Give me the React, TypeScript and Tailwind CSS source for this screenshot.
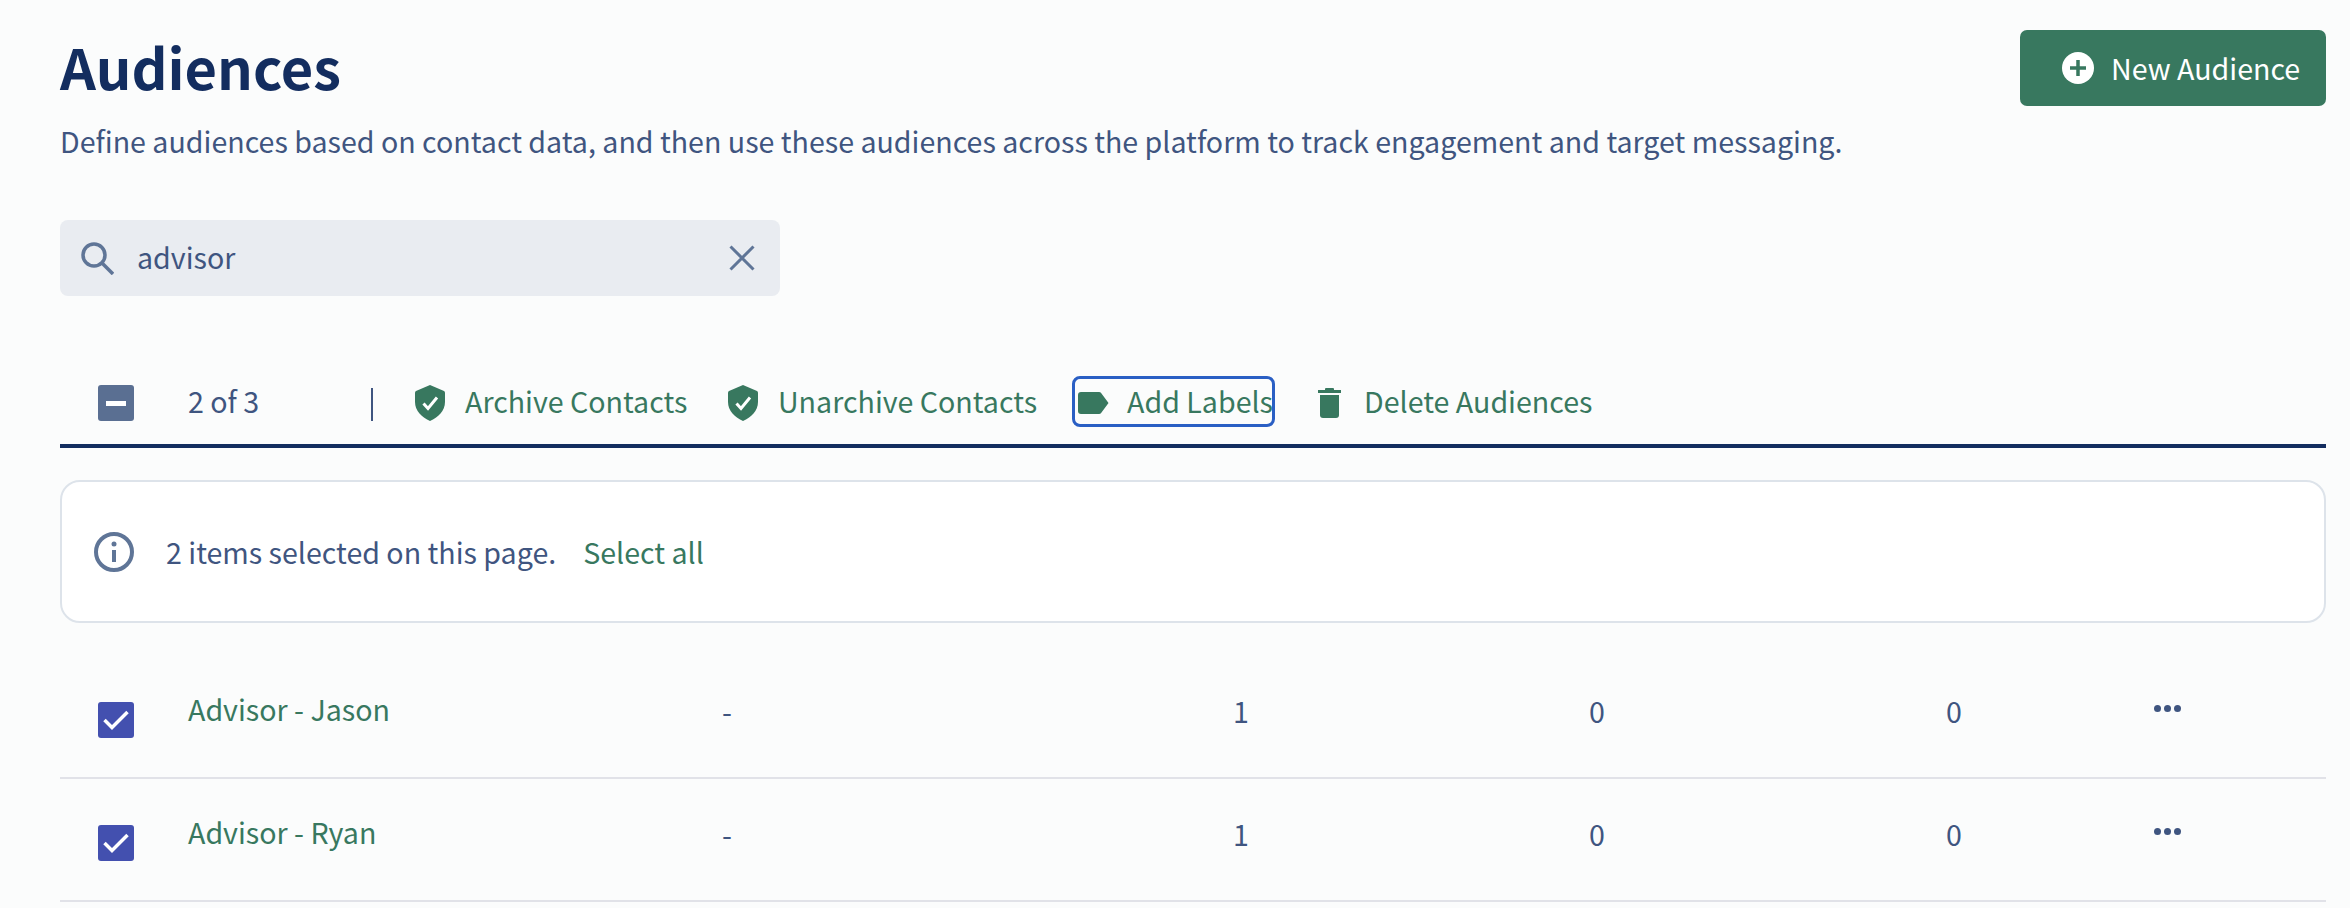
const FONT = "font-['Noto_Sans_CJK_SC','Noto_Sans',sans-serif]";

function ShieldIcon() {
  return (
    <svg width="30" height="36" viewBox="0 0 30 36" className="shrink-0">
      <path d="M15 0 L29 6 Q30 6.5 30 8 V17 C30 26 23 32.500 15 36 C7 32.500 0 26 0 17 V8 Q0 6.500 1 6 Z" fill="#38785f" />
      <path d="M8.500 18.500 L13 23.500 L22 12.500" fill="none" stroke="#ffffff" strokeWidth="3" />
    </svg>
  );
}

function TagIcon() {
  return (
    <svg width="31" height="22" viewBox="0 0 31 22" className="shrink-0">
      <path d="M3 0 H21 Q22.500 0 23.300 1.200 L30.500 11 L23.300 20.800 Q22.500 22 21 22 H3 Q0 22 0 19 V3 Q0 0 3 0 Z" fill="#38785f" />
    </svg>
  );
}

function TrashIcon() {
  return (
    <svg width="23" height="30" viewBox="0 0 23 30" className="shrink-0">
      <path d="M8 0 H15 Q16 0 16 1 V2 H23 V5 H0 V2 H7 V1 Q7 0 8 0 Z" fill="#38785f" />
      <path d="M2 7 H21 V27 Q21 30 18 30 H5 Q2 30 2 27 Z" fill="#38785f" />
    </svg>
  );
}

function RowCheck() {
  return (
    <div className="flex h-[36px] w-[36px] items-center justify-center rounded-[3px] bg-[#4350af]">
      <svg width="28" height="22" viewBox="0 0 28 22">
        <path d="M2.500 11 L10 18.500 L25.500 3" fill="none" stroke="#ffffff" strokeWidth="3.500" />
      </svg>
    </div>
  );
}

function ToolbarAction({
  icon,
  label,
  className,
}: {
  icon: React.ReactNode;
  label: string;
  className: string;
}) {
  return (
    <button type="button" className={`flex h-[36px] items-center whitespace-nowrap text-[#38785f] ${className}`}>
      {icon}
      <span className="-mt-[4px]">{label}</span>
    </button>
  );
}

const ROWS = ["Advisor - Jason", "Advisor - Ryan"];

export default function App() {
  return (
    <div className={`${FONT} min-h-[908px] overflow-hidden bg-[#fbfcfc] pl-[60px] pr-[24px] pt-[28px] text-[28.6px] leading-[36px] text-[#3f5580]`}>
      <div className="flex items-start justify-between">
        <div>
          <h1 className="text-[56px] leading-[76px] font-bold text-[#132d5f]">Audiences</h1>
          <p className="mt-[19px] leading-[36px]">
            Define audiences based on contact data, and then use these audiences across the platform to track engagement and target messaging.
          </p>
        </div>
        <button type="button" className="mt-[2px] flex h-[76px] w-[306px] items-center rounded-[7px] bg-[#38785f] pl-[42px] text-white">
          <svg width="32" height="32" viewBox="0 0 32 32" className="mr-[17px]">
            <circle cx="16" cy="16" r="16" fill="#ffffff" />
            <path d="M16 8 V24 M8 16 H24" stroke="#38785f" strokeWidth="3.500" />
          </svg>
          New Audience
        </button>
      </div>

      <div className="mt-[61px] flex h-[76px] w-[720px] items-center rounded-[8px] bg-[#e9ecf1] pl-[21px] pr-[25px]">
        <svg width="33" height="33" viewBox="0 0 33 33" className="shrink-0">
          <circle cx="13" cy="13" r="11" fill="none" stroke="#5f7597" strokeWidth="3.500" />
          <path d="M21 21 L32 32" stroke="#5f7597" strokeWidth="3.500" />
        </svg>
        <span className="ml-[23px] flex-1 pb-[2px]">advisor</span>
        <svg width="26" height="26" viewBox="0 0 26 26" className="shrink-0">
          <path d="M1.500 1.500 L24.500 24.500 M24.500 1.500 L1.500 24.500" stroke="#5f7597" strokeWidth="3" />
        </svg>
      </div>

      <div className="mt-[80px] flex h-[72px] items-start border-b-[4px] border-[#132d5f] pl-[38px] pt-[9px]">
        <div className="flex h-[36px] w-[36px] items-center justify-center rounded-[3px] bg-[#5a6f92]">
          <div className="h-[5px] w-[20px] bg-white" />
        </div>
        <span className="ml-[54px] mt-[-2px] w-[183px]">2 of 3</span>
        <div className="mt-[3px] h-[33px] w-[2px] bg-[#3f5580]" />
        <ToolbarAction icon={<ShieldIcon />} label="Archive Contacts" className="ml-[42px] w-[313px] gap-[20px]" />
        <ToolbarAction icon={<ShieldIcon />} label="Unarchive Contacts" className="gap-[20px]" />
        <div className="relative ml-[35px]">
          <ToolbarAction icon={<TagIcon />} label="Add Labels" className="w-[203px] gap-[18px] pl-[6px]" />
          <div className="absolute left-0 top-[-9px] h-[51px] w-[203px] rounded-[8px] border-[3.5px] border-[#2a5fc4]" />
        </div>
        <ToolbarAction icon={<TrashIcon />} label="Delete Audiences" className="ml-[43px] gap-[23px]" />
      </div>

      <div className="mt-[32px] flex h-[143px] items-center rounded-[20px] border-[2px] border-[#dde3ea] bg-white pl-[32px]">
        <svg width="40" height="40" viewBox="0 0 40 40" className="shrink-0">
          <circle cx="20" cy="20" r="18" fill="none" stroke="#5f7597" strokeWidth="4" />
          <circle cx="20" cy="12" r="2.500" fill="#5f7597" />
          <path d="M20 18 V30" stroke="#5f7597" strokeWidth="4" />
        </svg>
        <span className="ml-[32px]">2 items selected on this page.</span>
        <span className="ml-[27px] text-[#38785f]">Select all</span>
      </div>

      <div className="mt-[33px]">
        {ROWS.map((name) => (
          <div
            key={name}
            className="grid h-[123px] grid-cols-[128px_534px_511px_356px_357px_208px_1fr] border-b-[2px] border-[#e1e2e8]"
          >
            <div className="pl-[38px] pt-[46px]">
              <RowCheck />
            </div>
            <span className="pt-[35px] text-[#38785f]">{name}</span>
            <span className="pt-[37px]">-</span>
            <span className="pt-[37px]">1</span>
            <span className="pt-[37px]">0</span>
            <span className="pt-[37px]">0</span>
            <div className="flex gap-[3px] pt-[49px]">
              <div className="h-[7px] w-[7px] rounded-full bg-[#3f5580]" />
              <div className="h-[7px] w-[7px] rounded-full bg-[#3f5580]" />
              <div className="h-[7px] w-[7px] rounded-full bg-[#3f5580]" />
            </div>
          </div>
        ))}
      </div>
    </div>
  );
}
